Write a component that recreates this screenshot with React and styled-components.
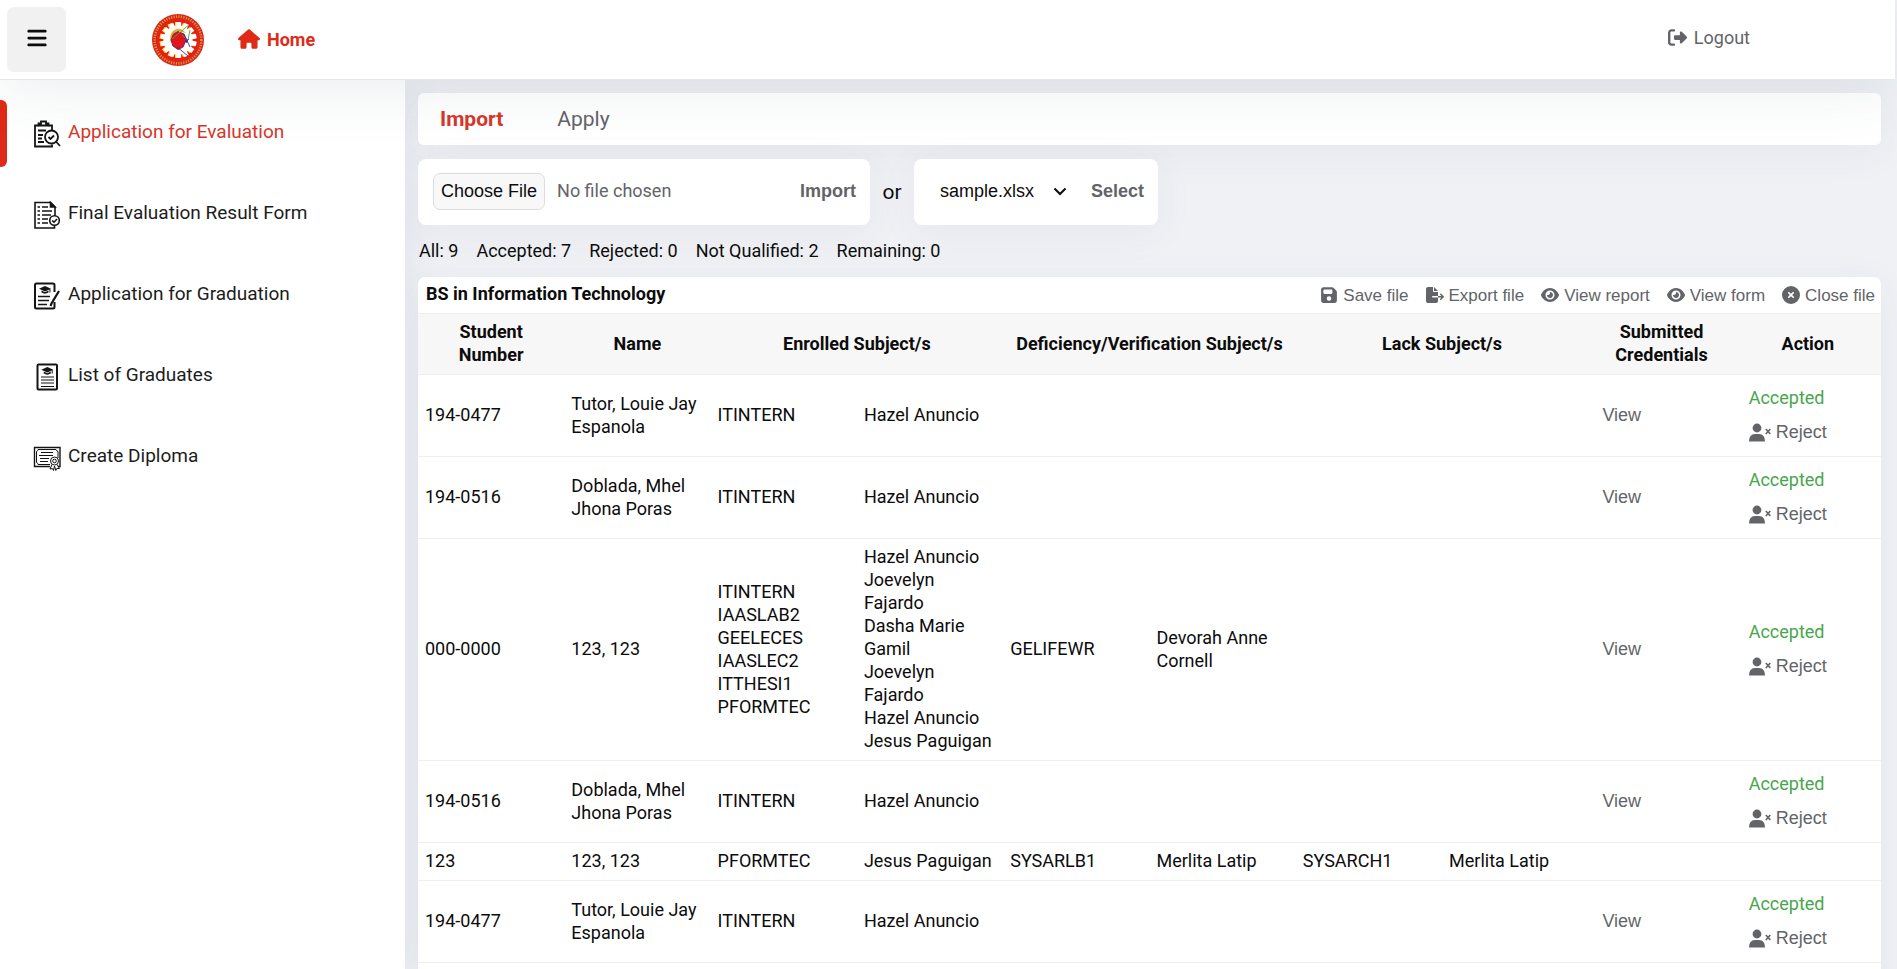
import React from "react";
import styled, { createGlobalStyle } from "styled-components";
import {
  FaHouse,
  FaBars,
  FaRightFromBracket,
  FaFloppyDisk,
  FaFileExport,
  FaEye,
  FaCircleXmark,
} from "react-icons/fa6";

const GlobalStyle = createGlobalStyle`
  *, *::before, *::after { box-sizing: border-box; }
  html, body { margin: 0; height: 100%; }
  #root { height: 100%; }
  body {
    background: #eff1f5;
    color: #0c0c0c;
    font-family: Roboto, "Liberation Sans", sans-serif;
    font-size: 18px;
    line-height: 23px;
    overflow: hidden;
  }
  button, select, input { font: inherit; color: inherit; }
`;

const RED = "#df2a17";
const GREY = "#626468";
const ARIAL = '"Liberation Sans", Arial, sans-serif';

const Page = styled.div`
  height: 100vh;
  display: flex;
  flex-direction: column;
`;

const Header = styled.header`
  flex: none;
  height: 80px;
  margin-right: 2px;
  padding: 7px 145px 8px 7px;
  display: flex;
  align-items: center;
  background: #fff;
  border-bottom: 1px solid #e6e7ea;
  box-shadow: 0 8px 60px rgba(60, 75, 100, 0.1);
  position: relative;
  z-index: 1;
`;

const MenuButton = styled.button`
  width: 59px;
  height: 65px;
  padding: 0 0 3px;
  border: 0;
  border-radius: 7px;
  background: #f1f1f1;
  display: grid;
  place-items: center;
  cursor: pointer;
  svg { width: 22px; height: 22px; display: block; }
`;

const LogoLink = styled.a`
  margin: 2px 0 0 85px;
  svg { display: block; width: 54px; height: 54px; }
`;

const HomeLink = styled.a`
  margin-left: 33px;
  display: flex;
  align-items: center;
  gap: 7px;
  color: ${RED};
  font-weight: 700;
  text-decoration: none;
  svg { width: 22px; height: 20px; }
`;

const LogoutLink = styled.a`
  margin-left: auto;
  padding-bottom: 4px;
  display: flex;
  align-items: center;
  gap: 7px;
  color: ${GREY};
  text-decoration: none;
  svg { width: 19px; height: 19px; }
`;

const Body = styled.div`
  flex: 1;
  min-height: 0;
  display: flex;
`;

const Sidebar = styled.nav`
  flex: none;
  width: 405px;
  padding-top: 20px;
  background: #fff;
  box-shadow: 0 0 40px rgba(60, 75, 100, 0.09);
`;

const NavList = styled.ul`
  list-style: none;
  margin: 0;
  padding: 0;
`;

const NavItem = styled.li`
  display: grid;
  grid-template-columns: 7px 1fr;
  margin-bottom: 14px;
`;

const NavMarker = styled.span`
  border-radius: 0 6px 6px 0;
  background: ${({ $active }) => ($active ? RED : "transparent")};
`;

const NavAnchor = styled.a`
  height: 67px;
  padding: 0 0 5px 26px;
  display: flex;
  align-items: center;
  gap: 7px;
  color: ${({ $active }) => ($active ? "#d6372a" : "#1c1c1c")};
  font-size: 19px;
  text-decoration: none;
  svg { width: 28px; height: 28px; margin-top: 5px; color: #151515; }
`;

const Main = styled.main`
  flex: 1;
  min-width: 0;
  padding: 13px 16px 0 13px;
  overflow: auto;
  scrollbar-width: none;
`;

const Tabs = styled.div`
  height: 52px;
  padding: 0 22px;
  display: flex;
  align-items: center;
  gap: 54px;
  background: #fff;
  border-radius: 6px;
  box-shadow: 0 8px 40px rgba(60, 75, 100, 0.06);
`;

const Tab = styled.button`
  padding: 0;
  border: 0;
  background: none;
  font-size: 21px;
  font-weight: ${({ $active }) => ($active ? 700 : 400)};
  color: ${({ $active }) => ($active ? "#d6372a" : GREY)};
`;

const Pickers = styled.div`
  margin-top: 14px;
  display: flex;
  align-items: center;
`;

const Card = styled.form`
  height: 66px;
  display: flex;
  align-items: center;
  background: #fff;
  border-radius: 8px;
  box-shadow: 0 8px 40px rgba(60, 75, 100, 0.06);
`;

const ImportCard = styled(Card)`
  width: 452px;
  padding: 0 14px 2px 15px;
  justify-content: space-between;
`;

const SelectCard = styled(Card)`
  padding: 0 14px 2px 26px;
  gap: 24px;
`;

const FileInput = styled.input`
  width: 280px;
  color: ${GREY};
  &::file-selector-button {
    height: 37px;
    margin: 0 12px 0 0;
    padding: 0 7px;
    border: 1px solid #dcdcdc;
    border-radius: 7px;
    background: #f8f8f8;
    color: #0c0c0c;
    font-family: ${ARIAL};
    font-size: 18px;
  }
`;

const Submit = styled.button`
  padding: 0;
  border: 0;
  background: none;
  color: ${GREY};
  font-family: ${ARIAL};
  font-weight: 700;
`;

const Or = styled.span`
  width: 44px;
  text-align: center;
  font-size: 21px;
`;

const SelectWrap = styled.label`
  display: flex;
  align-items: center;
  svg { width: 14px; height: 14px; margin-left: -14px; pointer-events: none; }
`;

const FileSelect = styled.select`
  appearance: none;
  width: 127px;
  padding: 0;
  border: 0;
  background: none;
  font-family: ${ARIAL};
`;

const Stats = styled.ul`
  list-style: none;
  margin: 14px 0 15px;
  padding: 0 1px;
  display: flex;
  gap: 18px;
`;

const Panel = styled.section`
  background: #fff;
  border-radius: 7px 7px 0 0;
  box-shadow: 0 8px 40px rgba(60, 75, 100, 0.06);
`;

const PanelHead = styled.div`
  height: 36px;
  padding: 0 6px 0 8px;
  display: flex;
  align-items: center;
  justify-content: space-between;
`;

const PanelTitle = styled.h2`
  margin: 0;
  padding-bottom: 3px;
  font-size: 18px;
  font-weight: 700;
`;

const ToolRow = styled.div`
  display: flex;
  gap: 17px;
`;

const Tool = styled.button`
  padding: 0;
  border: 0;
  background: none;
  display: flex;
  align-items: center;
  gap: 5px;
  color: ${GREY};
  font-family: ${ARIAL};
  font-size: 17px;
  svg { height: 18px; width: auto; }
`;

const Table = styled.table`
  width: 100%;
  table-layout: fixed;
  border-collapse: collapse;
`;

const Th = styled.th`
  padding: 6px 7px 8px;
  border-top: 1px solid #efefef;
  border-bottom: 1px solid #efefef;
  background: #f7f7f7;
  font-weight: 700;
  text-align: center;
`;

const Td = styled.td`
  padding: 6px 8px 8px 7px;
  border-bottom: 1px solid #efefef;
`;

const Line = styled.div``;

const RowButton = styled(Tool)`
  font-size: 18px;
  svg { height: 19px; }
`;

const Credentials = styled.div`
  padding: 2px 0 0 7px;
`;

const Decision = styled.div`
  height: 67px;
  padding: 5px 0 0 7px;
  display: flex;
  flex-direction: column;
  align-items: flex-start;
  gap: 12px;
`;

const Accepted = styled.span`
  color: #48a64c;
`;

function Logo() {
  const teeth = Array.from({ length: 14 }, (_, i) => (i * 360) / 14);
  return (
    <svg viewBox="0 0 54 54" aria-label="University seal">
      <circle cx="27" cy="27" r="26" fill="#d8251a" />
      <circle cx="27" cy="27" r="23.4" fill="none" stroke="#e9903a" strokeWidth="2.6" strokeDasharray="1.2 1.3" />
      <circle cx="27" cy="27" r="20.4" fill="#f4140c" stroke="#c8371c" strokeWidth="1" />
      {teeth.map((a) => (
        <rect key={a} x="24" y="9" width="5" height="8" fill="#efe04a" transform={`rotate(${a} 26.500 27)`} />
      ))}
      {teeth.map((a) => (
        <rect key={a} x="25.400" y="9" width="4.800" height="8" fill="#fff" transform={`rotate(${a} 27.800 27)`} />
      ))}
      <circle cx="27" cy="27" r="14.6" fill="#fff" />
      <path d="M21 19Q28 12 35 20L31 19Q27 16 22 22L20 30Q18 24 21 19Z" fill="#dcae20" />
      <path d="M27 18.500L33 21L35 27L32 34L27 36.500L22 33L20 27L22.500 21Z" fill="#e0141a" stroke="#8c1a50" strokeWidth="1" />
      <path d="M21 26L37 12.500M39 17L37 27L31 22" stroke="#52a83a" strokeWidth="0.9" fill="none" />
      <path d="M33 21L39 34M26 34L37 43M35 29L38 26" stroke="#3a2ea8" strokeWidth="0.9" fill="none" />
      <circle cx="35.500" cy="28.500" r="1.3" fill="#2c2490" />
    </svg>
  );
}

const strokeProps = { viewBox: "0 0 28 28", fill: "none", stroke: "currentColor", strokeWidth: 1.6 };

const EvaluationIcon = () => (
  <svg {...strokeProps} strokeWidth="1.800">
    <path d="M19 10V5.500H15.500M5.500 5.500H2V26.500H19V24.500" />
    <path d="M5.500 5.500V3.500H8V1.500H13V3.500H15.500V5.500Z" />
    <path d="M5 10.500H13M5 15H10M5 18.500H9M5 22H11" />
    <circle cx="18.500" cy="17" r="6.500" />
    <path d="M15.500 17L17.500 19L21 15.500M23 21.500L27 26" />
  </svg>
);

const ResultIcon = () => (
  <svg {...strokeProps}>
    <path d="M22 15V6L17.500 1.500H2V27H21.500V25" />
    <path d="M17.500 1.500V6H22Z" fill="currentColor" />
    <path d="M4.500 6H7M9 6H15M4.500 10H7M9 10H19M4.500 14H7M9 14H18M4.500 18H7M9 18H15M4.500 22H7M9 22H15" />
    <circle cx="21.500" cy="19.500" r="4.800" fill="#fff" />
    <path d="M19 19.500L21 21.200L24 18" />
  </svg>
);

const Cap = () => (
  <g fill="currentColor" stroke="none">
    <path d="M12 4L18 6.800L12 9.500L6 6.800Z" />
    <path d="M8.500 8.600L12 10.200L15.500 8.600V10.600Q12 12.800 8.500 10.600Z" />
    <path d="M16.400 7H17.400V10.500H16.400Z" />
  </g>
);

const GraduationIcon = () => (
  <svg {...strokeProps}>
    <path d="M21.500 10V3Q21.500 1.500 20 1.500H3.500Q2 1.500 2 3V25Q2 26.500 3.500 26.500H20Q21.500 26.500 21.500 25V20" strokeWidth="2" />
    <Cap />
    <path d="M5 14.500H17M5 18.500H16M5 22.500H14" strokeWidth="1.300" />
    <path d="M26 9L18.500 21.500L17.500 24" strokeWidth="2.200" />
  </svg>
);

const GraduatesIcon = () => (
  <svg {...strokeProps}>
    <rect x="4.500" y="1.500" width="19.500" height="25" rx="1" strokeWidth="2" />
    <g transform="translate(2.300 0)"><Cap /></g>
    <path d="M8 14H21M8 17H21M8 20H21M8 23.500H21" strokeWidth="1.200" />
  </svg>
);

const DiplomaIcon = () => (
  <svg {...strokeProps} strokeWidth="1">
    <path d="M17 22.500H1.500V3.500H27V22.500H25" strokeWidth="1.400" />
    <path d="M17 20.500H5Q5 19 3.500 18.500V7.500Q5 7 5 5.500H23Q23.500 7 25 7.500V14" />
    <path d="M8 8.500H20M6 11.500H20M7 14.500H16M7 17.500H15" />
    <circle cx="21.500" cy="17" r="4" fill="#fff" />
    <circle cx="21.500" cy="17" r="1.800" />
    <path d="M19 20.500L17 25L19.500 24.500L20.500 26.500L21.500 22L22.800 26.500L23.800 24.500H26.500L24 20.500" />
  </svg>
);

const RejectIcon = () => (
  <svg viewBox="0 0 22 19" fill="currentColor">
    <circle cx="8" cy="5" r="4.400" />
    <path d="M0 18.500Q0 11 6 11H10Q16 11 16 18.500Z" />
    <path d="M16.800 6L21.300 11M21.300 6L16.800 11" stroke="currentColor" strokeWidth="1.600" />
  </svg>
);

const NAV = [
  ["Application for Evaluation", EvaluationIcon],
  ["Final Evaluation Result Form", ResultIcon],
  ["Application for Graduation", GraduationIcon],
  ["List of Graduates", GraduatesIcon],
  ["Create Diploma", DiplomaIcon],
];

const STATS = ["All: 9", "Accepted: 7", "Rejected: 0", "Not Qualified: 2", "Remaining: 0"];

const TOOLS = [
  ["Save file", FaFloppyDisk],
  ["Export file", FaFileExport],
  ["View report", FaEye],
  ["View form", FaEye],
  ["Close file", FaCircleXmark],
];

const COLUMNS = [
  ["Student Number", 1],
  ["Name", 1],
  ["Enrolled Subject/s", 2],
  ["Deficiency/Verification Subject/s", 2],
  ["Lack Subject/s", 2],
  ["Submitted Credentials", 1],
  ["Action", 1],
];

const tutor = { id: "194-0477", name: "Tutor, Louie Jay Espanola", cells: [["ITINTERN"], ["Hazel Anuncio"], [], [], [], []], decided: true };
const doblada = { id: "194-0516", name: "Doblada, Mhel Jhona Poras", cells: [["ITINTERN"], ["Hazel Anuncio"], [], [], [], []], decided: true };

const ROWS = [
  tutor,
  doblada,
  {
    id: "000-0000",
    name: "123, 123",
    cells: [
      ["ITINTERN", "IAASLAB2", "GEELECES", "IAASLEC2", "ITTHESI1", "PFORMTEC"],
      ["Hazel Anuncio", "Joevelyn Fajardo", "Dasha Marie Gamil", "Joevelyn Fajardo", "Hazel Anuncio", "Jesus Paguigan"],
      ["GELIFEWR"],
      ["Devorah Anne Cornell"],
      [],
      [],
    ],
    decided: true,
  },
  doblada,
  {
    id: "123",
    name: "123, 123",
    cells: [["PFORMTEC"], ["Jesus Paguigan"], ["SYSARLB1"], ["Merlita Latip"], ["SYSARCH1"], ["Merlita Latip"]],
    decided: false,
  },
  tutor,
  doblada,
];

function StudentRow({ row }) {
  return (
    <tr>
      <Td>{row.id}</Td>
      <Td>{row.name}</Td>
      {row.cells.map((lines, i) => (
        <Td key={i}>
          {lines.map((text, j) => (
            <Line key={j}>{text}</Line>
          ))}
        </Td>
      ))}
      <Td>
        {row.decided && (
          <Credentials>
            <RowButton type="button">View</RowButton>
          </Credentials>
        )}
      </Td>
      <Td>
        {row.decided && (
          <Decision>
            <Accepted>Accepted</Accepted>
            <RowButton type="button">
              <RejectIcon />
              Reject
            </RowButton>
          </Decision>
        )}
      </Td>
    </tr>
  );
}

export default function App() {
  return (
    <Page>
      <GlobalStyle />
      <Header>
        <MenuButton type="button" aria-label="Toggle menu">
          <FaBars />
        </MenuButton>
        <LogoLink href="#" aria-label="Seal">
          <Logo />
        </LogoLink>
        <HomeLink href="#">
          <FaHouse />
          Home
        </HomeLink>
        <LogoutLink href="#">
          <FaRightFromBracket />
          Logout
        </LogoutLink>
      </Header>
      <Body>
        <Sidebar>
          <NavList>
            {NAV.map(([label, Icon], i) => (
              <NavItem key={label}>
                <NavMarker $active={i === 0} />
                <NavAnchor href="#" $active={i === 0}>
                  <Icon />
                  {label}
                </NavAnchor>
              </NavItem>
            ))}
          </NavList>
        </Sidebar>
        <Main>
          <Tabs>
            <Tab type="button" $active>Import</Tab>
            <Tab type="button">Apply</Tab>
          </Tabs>
          <Pickers>
            <ImportCard>
              <FileInput type="file" aria-label="File to import" />
              <Submit type="button">Import</Submit>
            </ImportCard>
            <Or>or</Or>
            <SelectCard>
              <SelectWrap>
                <FileSelect aria-label="Existing file">
                  <option>sample.xlsx</option>
                </FileSelect>
                <svg viewBox="0 0 14 14" fill="none" stroke="#0c0c0c" strokeWidth="2">
                  <path d="M1.500 4.500L7 10L12.500 4.500" />
                </svg>
              </SelectWrap>
              <Submit type="button">Select</Submit>
            </SelectCard>
          </Pickers>
          <Stats>
            {STATS.map((s) => (
              <li key={s}>{s}</li>
            ))}
          </Stats>
          <Panel>
            <PanelHead>
              <PanelTitle>BS in Information Technology</PanelTitle>
              <ToolRow>
                {TOOLS.map(([label, Icon]) => (
                  <Tool type="button" key={label}>
                    <Icon />
                    {label}
                  </Tool>
                ))}
              </ToolRow>
            </PanelHead>
            <Table>
              <colgroup>
                {Array.from({ length: 10 }, (_, i) => (
                  <col key={i} />
                ))}
              </colgroup>
              <thead>
                <tr>
                  {COLUMNS.map(([label, span]) => (
                    <Th key={label} colSpan={span}>
                      {label}
                    </Th>
                  ))}
                </tr>
              </thead>
              <tbody>
                {ROWS.map((row, i) => (
                  <StudentRow key={i} row={row} />
                ))}
              </tbody>
            </Table>
          </Panel>
        </Main>
      </Body>
    </Page>
  );
}
